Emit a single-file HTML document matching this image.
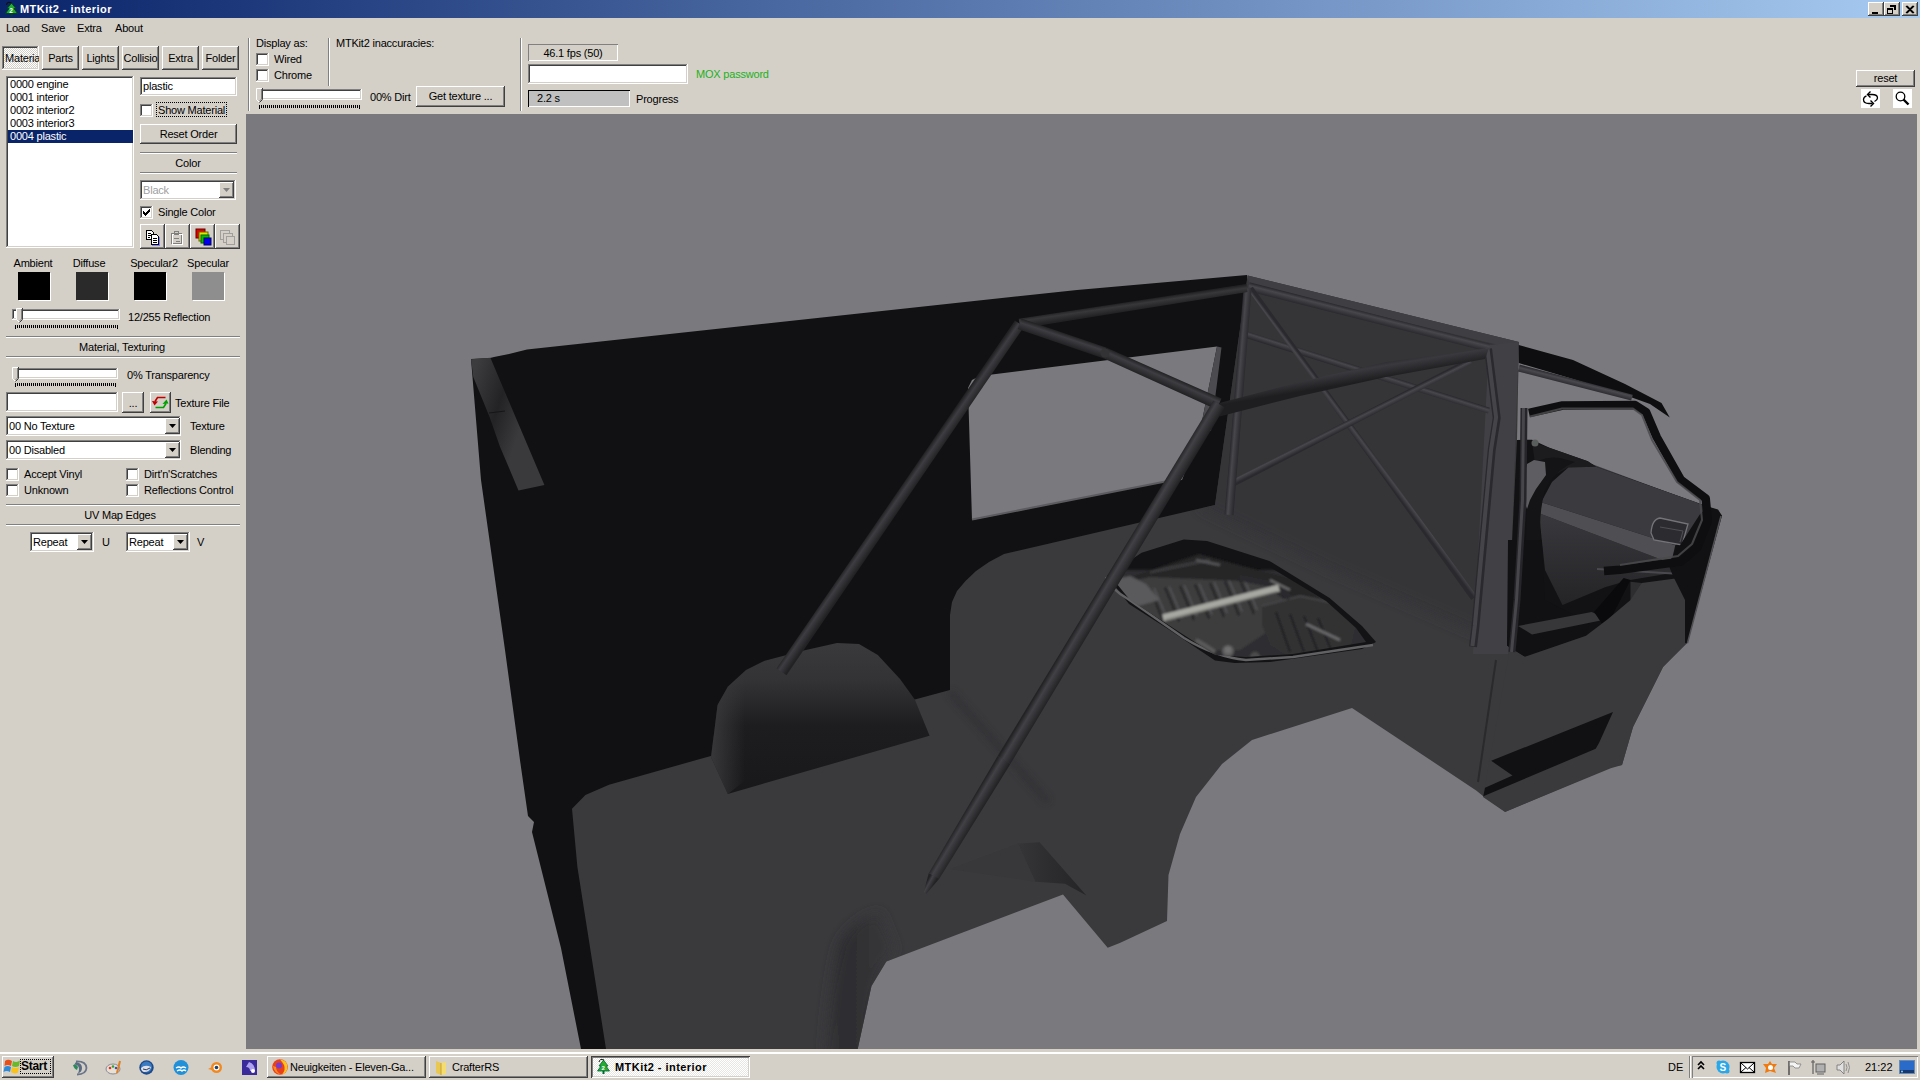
<!DOCTYPE html>
<html><head><meta charset="utf-8"><style>
html,body{margin:0;padding:0}
body{width:1920px;height:1080px;overflow:hidden;background:#d4d0c8;position:relative;font-family:"Liberation Sans",sans-serif}
.a{position:absolute}
.t{position:absolute;font:11px/13px "Liberation Sans",sans-serif;white-space:nowrap;color:#000;letter-spacing:-0.2px}
.c{text-align:center}
.raised{box-shadow:inset -1px -1px #404040,inset 1px 1px #fff,inset -2px -2px #808080,inset 2px 2px #d4d0c8}
.sunken{box-shadow:inset -1px -1px #fff,inset 1px 1px #808080,inset -2px -2px #d4d0c8,inset 2px 2px #404040}
</style></head><body>
<div class="a" style="left:0;top:0;width:1920px;height:18px;background:linear-gradient(90deg,#0a246a,#a6caf0)"></div>
<svg class="a" style="left:3px;top:0px" width="17" height="18"><path d="M8.5 3 L13 8.5 L11 8.5 L14.5 13.5 L2.5 13.5 L6 8.5 L4 8.5 Z" fill="#22aa33" stroke="#042" stroke-width="1"/><rect x="7.5" y="13.5" width="2" height="3" fill="#042"/><path d="M3.5 5 Q4 1 8.5 3" stroke="#111" fill="none" stroke-width="1.2"/><text x="6.3" y="12.5" font-size="6.5" fill="#fff" font-family="Liberation Sans" font-weight="bold">2</text></svg>
<div class="t" style="left:20px;top:3px;color:#fff;font-weight:bold;letter-spacing:0.45px">MTKit2 - interior</div>
<div class="a raised" style="left:1868px;top:2px;width:16px;height:14px;background:#d4d0c8"><svg width="16" height="14" style="position:absolute;left:0;top:0"><path d="M4 10h6v2h-6z" fill="#000"/></svg></div>
<div class="a raised" style="left:1884px;top:2px;width:16px;height:14px;background:#d4d0c8"><svg width="16" height="14" style="position:absolute;left:0;top:0"><path d="M6 3h6v5h-2v-3h-4z M3 6h6v6h-6z M4 8h4v3h-4z" fill="#000" fill-rule="evenodd"/><rect x="6" y="3" width="6" height="1.8" fill="#000"/><rect x="3" y="6" width="6" height="1.8" fill="#000"/></svg></div>
<div class="a raised" style="left:1902px;top:2px;width:16px;height:14px;background:#d4d0c8"><svg width="16" height="14" style="position:absolute;left:0;top:0"><path d="M4 4 L11 11 M11 4 L4 11 M5 4 L12 11 M12 4 L5 11" stroke="#000" stroke-width="1.2"/></svg></div>
<div class="t " style="left:6px;top:22px;">Load</div>
<div class="t " style="left:41px;top:22px;">Save</div>
<div class="t " style="left:77px;top:22px;">Extra</div>
<div class="t " style="left:115px;top:22px;">About</div>
<div class="a sunken" style="left:2px;top:46px;width:37px;height:24px;background-color:#e8e6e2;background-image:repeating-conic-gradient(#fff 0 25%,#d4d0c8 0 50%);background-size:2px 2px;overflow:hidden"><div class="t" style="left:3px;top:6px">Materia</div></div>
<div class="a raised" style="left:42px;top:46px;width:37px;height:24px;background:#d4d0c8"><div class="t c" style="left:0;top:6px;width:37px">Parts</div></div>
<div class="a raised" style="left:82px;top:46px;width:37px;height:24px;background:#d4d0c8"><div class="t c" style="left:0;top:6px;width:37px">Lights</div></div>
<div class="a raised" style="left:122px;top:46px;width:37px;height:24px;background:#d4d0c8"><div class="t c" style="left:0;top:6px;width:37px">Collisio</div></div>
<div class="a raised" style="left:162px;top:46px;width:37px;height:24px;background:#d4d0c8"><div class="t c" style="left:0;top:6px;width:37px">Extra</div></div>
<div class="a raised" style="left:202px;top:46px;width:37px;height:24px;background:#d4d0c8"><div class="t c" style="left:0;top:6px;width:37px">Folder</div></div>
<div class="a sunken" style="left:6px;top:76px;width:128px;height:172px;background:#fff"></div>
<div class="t " style="left:10px;top:78px;">0000 engine</div>
<div class="t " style="left:10px;top:91px;">0001 interior</div>
<div class="t " style="left:10px;top:104px;">0002 interior2</div>
<div class="t " style="left:10px;top:117px;">0003 interior3</div>
<div class="a" style="left:8px;top:130px;width:125px;height:13px;background:#0a246a"></div>
<div class="t " style="left:10px;top:130px;color:#fff">0004 plastic</div>
<div class="a sunken" style="left:140px;top:77px;width:97px;height:19px;background:#fff"></div>
<div class="t " style="left:143px;top:80px;">plastic</div>
<div class="a sunken" style="left:140px;top:104px;width:13px;height:13px;background:#fff"></div>
<div class="t " style="left:158px;top:104px;">Show Material</div>
<div class="a" style="left:156px;top:102px;width:71px;height:15px;outline:1px dotted #000;outline-offset:-1px"></div>
<div class="a raised" style="left:140px;top:124px;width:97px;height:20px;background:#d4d0c8"><div class="t c" style="left:0;top:4px;width:97px">Reset Order</div></div>
<div class="a" style="left:140px;top:152px;width:97px;height:2px;border-top:1px solid #808080;border-bottom:1px solid #fff;height:0"></div>
<div class="t c " style="left:139.5px;top:157px;width:97px;">Color</div>
<div class="a" style="left:140px;top:172px;width:97px;height:2px;border-top:1px solid #808080;border-bottom:1px solid #fff;height:0"></div>
<div class="a sunken" style="left:140px;top:180px;width:96px;height:20px;background:#fff"></div>
<div class="t " style="left:143px;top:184px;color:#a0a0a0">Black</div>
<div class="a raised" style="left:219px;top:182px;width:15px;height:16px;background:#d4d0c8"><svg width="15" height="16" style="position:absolute;left:0;top:0"><path d="M4 6h7l-3.5 4z" fill="#808080"/></svg></div>
<div class="a sunken" style="left:140px;top:206px;width:13px;height:13px;background:#fff"><svg width="13" height="13" style="position:absolute;left:0;top:0" shape-rendering="crispEdges" fill="#000"><rect x="9" y="3" width="1" height="1"/><rect x="8" y="4" width="1" height="1"/><rect x="9" y="4" width="1" height="1"/><rect x="3" y="5" width="1" height="1"/><rect x="7" y="5" width="1" height="1"/><rect x="8" y="5" width="1" height="1"/><rect x="9" y="5" width="1" height="1"/><rect x="3" y="6" width="1" height="1"/><rect x="4" y="6" width="1" height="1"/><rect x="6" y="6" width="1" height="1"/><rect x="7" y="6" width="1" height="1"/><rect x="8" y="6" width="1" height="1"/><rect x="3" y="7" width="1" height="1"/><rect x="4" y="7" width="1" height="1"/><rect x="5" y="7" width="1" height="1"/><rect x="6" y="7" width="1" height="1"/><rect x="7" y="7" width="1" height="1"/><rect x="4" y="8" width="1" height="1"/><rect x="5" y="8" width="1" height="1"/><rect x="6" y="8" width="1" height="1"/><rect x="5" y="9" width="1" height="1"/></svg></div>
<div class="t " style="left:158px;top:206px;">Single Color</div>
<div class="a raised" style="left:140px;top:224px;width:25px;height:25px;background:#d4d0c8"></div>
<div class="a raised" style="left:165px;top:224px;width:25px;height:25px;background:#d4d0c8"></div>
<div class="a raised" style="left:190px;top:224px;width:25px;height:25px;background:#d4d0c8"></div>
<div class="a raised" style="left:215px;top:224px;width:25px;height:25px;background:#d4d0c8"></div>
<svg class="a" style="left:140px;top:224px" width="100" height="25">
<g transform="translate(6,6)" shape-rendering="crispEdges"><path d="M0.5 0.5h5l2 2v7h-7z" fill="#fff" stroke="#000"/><path d="M2 3h3M2 5h4M2 7h2" stroke="#000"/><path d="M5.5 4.5h5l2 2v8h-7z" fill="#fff" stroke="#000"/><path d="M7 8h4M7 10h4M7 12h4" stroke="#000"/><path d="M13 7v8h-7" stroke="#8080ff" fill="none"/></g>
<g transform="translate(30,6)" shape-rendering="crispEdges"><path d="M1.5 3.5h10v10h-10z" fill="none" stroke="#808080"/><path d="M2.5 4.5h10v10h-10z" fill="none" stroke="#fff"/><path d="M4.5 1.5h4v3h-4z" fill="none" stroke="#808080"/><path d="M4 8h5M6 11h4" stroke="#808080"/></g>
<g transform="translate(56,5)"><rect x="0" y="0" width="9" height="9" fill="#e00000" stroke="#600"/><rect x="3" y="3" width="9" height="9" fill="#e8e000" stroke="#660"/><rect x="5" y="6" width="8" height="8" fill="#00c000" stroke="#060"/><rect x="8" y="9" width="7" height="7" fill="#0000f0" stroke="#006"/></g>
<g transform="translate(80,6)" opacity="0.6"><rect x="0.5" y="0.5" width="9" height="9" fill="none" stroke="#808080"/><rect x="3.5" y="3.5" width="9" height="9" fill="#d4d0c8" stroke="#808080"/><rect x="6.5" y="6.5" width="8" height="8" fill="#d4d0c8" stroke="#808080"/></g>
</svg>
<div class="t c " style="left:-7.0px;top:257px;width:80px;">Ambient</div>
<div class="t c " style="left:49.0px;top:257px;width:80px;">Diffuse</div>
<div class="t c " style="left:114.0px;top:257px;width:80px;">Specular2</div>
<div class="t c " style="left:168.0px;top:257px;width:80px;">Specular</div>
<div class="a" style="left:18px;top:272px;width:32px;height:28px;background:#000;box-shadow:1px 1px #fff"></div>
<div class="a" style="left:76px;top:272px;width:32px;height:28px;background:#2a2a2a;box-shadow:1px 1px #fff"></div>
<div class="a" style="left:134px;top:272px;width:32px;height:28px;background:#000;box-shadow:1px 1px #fff"></div>
<div class="a" style="left:192px;top:272px;width:32px;height:28px;background:#8e8e8e;box-shadow:1px 1px #fff"></div>
<div class="a sunken" style="left:12px;top:309px;width:108px;height:11px;background:#fff"></div>
<svg class="a" style="left:16px;top:308px" width="8" height="16"><path d="M0.5,14.5 V0.5 H6.5 V11.5 L3.5,14.5" fill="#d4d0c8" stroke="none"/><path d="M0.5,11.5 V0.5 H6" stroke="#fff" fill="none"/><path d="M6.5,0 V11.5 L3.5,14.5" stroke="#404040" fill="none"/><path d="M5.5,1 V11 L3.5,13" stroke="#808080" fill="none"/><path d="M0.5,11.5 L3,14" stroke="#fff" fill="none"/></svg>
<svg class="a" style="left:0;top:0" width="1920" height="1080" shape-rendering="crispEdges" fill="#000"><rect x="15" y="325" width="1" height="4"/><rect x="17" y="325" width="1" height="3"/><rect x="19" y="325" width="1" height="3"/><rect x="21" y="325" width="1" height="3"/><rect x="23" y="325" width="1" height="3"/><rect x="25" y="325" width="1" height="3"/><rect x="27" y="325" width="1" height="3"/><rect x="29" y="325" width="1" height="3"/><rect x="31" y="325" width="1" height="3"/><rect x="33" y="325" width="1" height="3"/><rect x="35" y="325" width="1" height="3"/><rect x="37" y="325" width="1" height="3"/><rect x="39" y="325" width="1" height="3"/><rect x="41" y="325" width="1" height="3"/><rect x="43" y="325" width="1" height="3"/><rect x="45" y="325" width="1" height="3"/><rect x="47" y="325" width="1" height="3"/><rect x="49" y="325" width="1" height="3"/><rect x="51" y="325" width="1" height="3"/><rect x="53" y="325" width="1" height="3"/><rect x="55" y="325" width="1" height="3"/><rect x="57" y="325" width="1" height="3"/><rect x="59" y="325" width="1" height="3"/><rect x="61" y="325" width="1" height="3"/><rect x="63" y="325" width="1" height="3"/><rect x="65" y="325" width="1" height="3"/><rect x="67" y="325" width="1" height="3"/><rect x="69" y="325" width="1" height="3"/><rect x="71" y="325" width="1" height="3"/><rect x="73" y="325" width="1" height="3"/><rect x="75" y="325" width="1" height="3"/><rect x="77" y="325" width="1" height="3"/><rect x="79" y="325" width="1" height="3"/><rect x="81" y="325" width="1" height="3"/><rect x="83" y="325" width="1" height="3"/><rect x="85" y="325" width="1" height="3"/><rect x="87" y="325" width="1" height="3"/><rect x="89" y="325" width="1" height="3"/><rect x="91" y="325" width="1" height="3"/><rect x="93" y="325" width="1" height="3"/><rect x="95" y="325" width="1" height="3"/><rect x="97" y="325" width="1" height="3"/><rect x="99" y="325" width="1" height="3"/><rect x="101" y="325" width="1" height="3"/><rect x="103" y="325" width="1" height="3"/><rect x="105" y="325" width="1" height="3"/><rect x="107" y="325" width="1" height="3"/><rect x="109" y="325" width="1" height="3"/><rect x="111" y="325" width="1" height="3"/><rect x="113" y="325" width="1" height="3"/><rect x="115" y="325" width="1" height="3"/><rect x="117" y="325" width="1" height="4"/></svg>
<div class="t " style="left:128px;top:311px;">12/255 Reflection</div>
<div class="a" style="left:6px;top:336px;width:234px;height:2px;border-top:1px solid #808080;border-bottom:1px solid #fff;height:0"></div>
<div class="t c " style="left:22.0px;top:341px;width:200px;">Material, Texturing</div>
<div class="a" style="left:6px;top:356px;width:234px;height:2px;border-top:1px solid #808080;border-bottom:1px solid #fff;height:0"></div>
<div class="a sunken" style="left:12px;top:368px;width:106px;height:11px;background:#fff"></div>
<svg class="a" style="left:12px;top:367px" width="8" height="16"><path d="M0.5,14.5 V0.5 H6.5 V11.5 L3.5,14.5" fill="#d4d0c8" stroke="none"/><path d="M0.5,11.5 V0.5 H6" stroke="#fff" fill="none"/><path d="M6.5,0 V11.5 L3.5,14.5" stroke="#404040" fill="none"/><path d="M5.5,1 V11 L3.5,13" stroke="#808080" fill="none"/><path d="M0.5,11.5 L3,14" stroke="#fff" fill="none"/></svg>
<svg class="a" style="left:0;top:0" width="1920" height="1080" shape-rendering="crispEdges" fill="#000"><rect x="15" y="383" width="1" height="4"/><rect x="17" y="383" width="1" height="3"/><rect x="19" y="383" width="1" height="3"/><rect x="21" y="383" width="1" height="3"/><rect x="23" y="383" width="1" height="3"/><rect x="25" y="383" width="1" height="3"/><rect x="27" y="383" width="1" height="3"/><rect x="29" y="383" width="1" height="3"/><rect x="31" y="383" width="1" height="3"/><rect x="33" y="383" width="1" height="3"/><rect x="35" y="383" width="1" height="3"/><rect x="37" y="383" width="1" height="3"/><rect x="39" y="383" width="1" height="3"/><rect x="41" y="383" width="1" height="3"/><rect x="43" y="383" width="1" height="3"/><rect x="45" y="383" width="1" height="3"/><rect x="47" y="383" width="1" height="3"/><rect x="49" y="383" width="1" height="3"/><rect x="51" y="383" width="1" height="3"/><rect x="53" y="383" width="1" height="3"/><rect x="55" y="383" width="1" height="3"/><rect x="57" y="383" width="1" height="3"/><rect x="59" y="383" width="1" height="3"/><rect x="61" y="383" width="1" height="3"/><rect x="63" y="383" width="1" height="3"/><rect x="65" y="383" width="1" height="3"/><rect x="67" y="383" width="1" height="3"/><rect x="69" y="383" width="1" height="3"/><rect x="71" y="383" width="1" height="3"/><rect x="73" y="383" width="1" height="3"/><rect x="75" y="383" width="1" height="3"/><rect x="77" y="383" width="1" height="3"/><rect x="79" y="383" width="1" height="3"/><rect x="81" y="383" width="1" height="3"/><rect x="83" y="383" width="1" height="3"/><rect x="85" y="383" width="1" height="3"/><rect x="87" y="383" width="1" height="3"/><rect x="89" y="383" width="1" height="3"/><rect x="91" y="383" width="1" height="3"/><rect x="93" y="383" width="1" height="3"/><rect x="95" y="383" width="1" height="3"/><rect x="97" y="383" width="1" height="3"/><rect x="99" y="383" width="1" height="3"/><rect x="101" y="383" width="1" height="3"/><rect x="103" y="383" width="1" height="3"/><rect x="105" y="383" width="1" height="3"/><rect x="107" y="383" width="1" height="3"/><rect x="109" y="383" width="1" height="3"/><rect x="111" y="383" width="1" height="3"/><rect x="113" y="383" width="1" height="3"/><rect x="115" y="383" width="1" height="4"/></svg>
<div class="t " style="left:127px;top:369px;">0% Transparency</div>
<div class="a sunken" style="left:6px;top:392px;width:112px;height:20px;background:#fff"></div>
<div class="a raised" style="left:122px;top:392px;width:22px;height:21px;background:#d4d0c8"><div class="t c" style="left:0;top:5px;width:22px">...</div></div>
<div class="a raised" style="left:150px;top:392px;width:21px;height:21px;background:#d4d0c8"><svg width="21" height="21" style="position:absolute;left:0;top:0"><path d="M15.5,5.5 H7.5 L5,9.5" stroke="#c00000" stroke-width="1.6" fill="none"/><polygon points="2,9 8,9.5 4.5,13.5" fill="#c00000"/><path d="M5.5,15.5 H13.5 L16,11.5" stroke="#00a000" stroke-width="1.6" fill="none"/><polygon points="12.5,12 18.5,11.5 16.5,7.5" fill="#00a000"/></svg></div>
<div class="t " style="left:175px;top:397px;">Texture File</div>
<div class="a sunken" style="left:6px;top:416px;width:175px;height:20px;background:#fff"></div>
<div class="t " style="left:9px;top:420px;">00 No Texture</div>
<div class="a raised" style="left:165px;top:418px;width:15px;height:16px;background:#d4d0c8"><svg width="15" height="16" style="position:absolute;left:0;top:0"><path d="M4.0 6.0 h7 l-3.5 4 z" fill="#000"/></svg></div>
<div class="t " style="left:190px;top:420px;">Texture</div>
<div class="a sunken" style="left:6px;top:440px;width:175px;height:20px;background:#fff"></div>
<div class="t " style="left:9px;top:444px;">00 Disabled</div>
<div class="a raised" style="left:165px;top:442px;width:15px;height:16px;background:#d4d0c8"><svg width="15" height="16" style="position:absolute;left:0;top:0"><path d="M4.0 6.0 h7 l-3.5 4 z" fill="#000"/></svg></div>
<div class="t " style="left:190px;top:444px;">Blending</div>
<div class="a sunken" style="left:6px;top:468px;width:13px;height:13px;background:#fff"></div>
<div class="t " style="left:24px;top:468px;">Accept Vinyl</div>
<div class="a sunken" style="left:6px;top:484px;width:13px;height:13px;background:#fff"></div>
<div class="t " style="left:24px;top:484px;">Unknown</div>
<div class="a sunken" style="left:126px;top:468px;width:13px;height:13px;background:#fff"></div>
<div class="t " style="left:144px;top:468px;">Dirt'n'Scratches</div>
<div class="a sunken" style="left:126px;top:484px;width:13px;height:13px;background:#fff"></div>
<div class="t " style="left:144px;top:484px;">Reflections Control</div>
<div class="a" style="left:6px;top:504px;width:234px;height:2px;border-top:1px solid #808080;border-bottom:1px solid #fff;height:0"></div>
<div class="t c " style="left:20.0px;top:509px;width:200px;">UV Map Edges</div>
<div class="a" style="left:6px;top:524px;width:234px;height:2px;border-top:1px solid #808080;border-bottom:1px solid #fff;height:0"></div>
<div class="a sunken" style="left:30px;top:532px;width:64px;height:20px;background:#fff"></div>
<div class="t " style="left:33px;top:536px;">Repeat</div>
<div class="a raised" style="left:77px;top:534px;width:15px;height:16px;background:#d4d0c8"><svg width="15" height="16" style="position:absolute;left:0;top:0"><path d="M4.0 6.0 h7 l-3.5 4 z" fill="#000"/></svg></div>
<div class="t " style="left:102px;top:536px;">U</div>
<div class="a sunken" style="left:126px;top:532px;width:64px;height:20px;background:#fff"></div>
<div class="t " style="left:129px;top:536px;">Repeat</div>
<div class="a raised" style="left:173px;top:534px;width:15px;height:16px;background:#d4d0c8"><svg width="15" height="16" style="position:absolute;left:0;top:0"><path d="M4.0 6.0 h7 l-3.5 4 z" fill="#000"/></svg></div>
<div class="t " style="left:197px;top:536px;">V</div>
<div class="a" style="left:248px;top:38px;width:0px;height:73px;border-left:1px solid #808080;border-right:1px solid #fff;width:0"></div>
<div class="t " style="left:256px;top:37px;">Display as:</div>
<div class="a sunken" style="left:256px;top:53px;width:13px;height:13px;background:#fff"></div>
<div class="t " style="left:274px;top:53px;">Wired</div>
<div class="a sunken" style="left:256px;top:69px;width:13px;height:13px;background:#fff"></div>
<div class="t " style="left:274px;top:69px;">Chrome</div>
<div class="a" style="left:328px;top:38px;width:0px;height:48px;border-left:1px solid #808080;border-right:1px solid #fff;width:0"></div>
<div class="t " style="left:336px;top:37px;">MTKit2 inaccuracies:</div>
<div class="a sunken" style="left:256px;top:89px;width:106px;height:11px;background:#fff"></div>
<svg class="a" style="left:256px;top:88px" width="8" height="16"><path d="M0.5,14.5 V0.5 H6.5 V11.5 L3.5,14.5" fill="#d4d0c8" stroke="none"/><path d="M0.5,11.5 V0.5 H6" stroke="#fff" fill="none"/><path d="M6.5,0 V11.5 L3.5,14.5" stroke="#404040" fill="none"/><path d="M5.5,1 V11 L3.5,13" stroke="#808080" fill="none"/><path d="M0.5,11.5 L3,14" stroke="#fff" fill="none"/></svg>
<svg class="a" style="left:0;top:0" width="1920" height="1080" shape-rendering="crispEdges" fill="#000"><rect x="259" y="105" width="1" height="4"/><rect x="261" y="105" width="1" height="3"/><rect x="263" y="105" width="1" height="3"/><rect x="265" y="105" width="1" height="3"/><rect x="267" y="105" width="1" height="3"/><rect x="269" y="105" width="1" height="3"/><rect x="271" y="105" width="1" height="3"/><rect x="273" y="105" width="1" height="3"/><rect x="275" y="105" width="1" height="3"/><rect x="277" y="105" width="1" height="3"/><rect x="279" y="105" width="1" height="3"/><rect x="281" y="105" width="1" height="3"/><rect x="283" y="105" width="1" height="3"/><rect x="285" y="105" width="1" height="3"/><rect x="287" y="105" width="1" height="3"/><rect x="289" y="105" width="1" height="3"/><rect x="291" y="105" width="1" height="3"/><rect x="293" y="105" width="1" height="3"/><rect x="295" y="105" width="1" height="3"/><rect x="297" y="105" width="1" height="3"/><rect x="299" y="105" width="1" height="3"/><rect x="301" y="105" width="1" height="3"/><rect x="303" y="105" width="1" height="3"/><rect x="305" y="105" width="1" height="3"/><rect x="307" y="105" width="1" height="3"/><rect x="309" y="105" width="1" height="3"/><rect x="311" y="105" width="1" height="3"/><rect x="313" y="105" width="1" height="3"/><rect x="315" y="105" width="1" height="3"/><rect x="317" y="105" width="1" height="3"/><rect x="319" y="105" width="1" height="3"/><rect x="321" y="105" width="1" height="3"/><rect x="323" y="105" width="1" height="3"/><rect x="325" y="105" width="1" height="3"/><rect x="327" y="105" width="1" height="3"/><rect x="329" y="105" width="1" height="3"/><rect x="331" y="105" width="1" height="3"/><rect x="333" y="105" width="1" height="3"/><rect x="335" y="105" width="1" height="3"/><rect x="337" y="105" width="1" height="3"/><rect x="339" y="105" width="1" height="3"/><rect x="341" y="105" width="1" height="3"/><rect x="343" y="105" width="1" height="3"/><rect x="345" y="105" width="1" height="3"/><rect x="347" y="105" width="1" height="3"/><rect x="349" y="105" width="1" height="3"/><rect x="351" y="105" width="1" height="3"/><rect x="353" y="105" width="1" height="3"/><rect x="355" y="105" width="1" height="3"/><rect x="357" y="105" width="1" height="3"/><rect x="359" y="105" width="1" height="4"/></svg>
<div class="t " style="left:370px;top:91px;">00% Dirt</div>
<div class="a raised" style="left:416px;top:86px;width:89px;height:21px;background:#d4d0c8"><div class="t c" style="left:0;top:4px;width:89px">Get texture ...</div></div>
<div class="a" style="left:520px;top:38px;width:0px;height:73px;border-left:1px solid #808080;border-right:1px solid #fff;width:0"></div>
<div class="a" style="left:528px;top:44px;width:90px;height:17px;box-shadow:inset 1px 1px #808080,inset -1px -1px #fff"></div>
<div class="t c " style="left:528.0px;top:47px;width:90px;">46.1 fps (50)</div>
<div class="a sunken" style="left:528px;top:64px;width:160px;height:20px;background:#fff"></div>
<div class="t " style="left:696px;top:68px;color:#1cb01c">MOX password</div>
<div class="a" style="left:528px;top:90px;width:102px;height:17px;background:#c0c0c0;box-shadow:inset 1px 1px #000,inset -1px -1px #fff"></div>
<div class="t " style="left:537px;top:92px;">2.2 s</div>
<div class="t " style="left:636px;top:93px;">Progress</div>
<div class="a raised" style="left:1856px;top:70px;width:59px;height:17px;background:#d4d0c8"><div class="t c" style="left:0;top:2px;width:59px">reset</div></div>
<div class="a" style="left:1861px;top:89px;width:19px;height:19px;background:#fff"><svg width="19" height="19" style="position:absolute;left:0;top:0"><path d="M7,5.5 H11 Q16.5,5.5 16.5,9 Q16.5,11 13.5,12.5" stroke="#000" stroke-width="1.3" fill="none"/><path d="M9.5,2.5 L6.5,5.5 L9.5,8.5" stroke="#000" stroke-width="1.4" fill="none"/><path d="M5.5,6.8 Q2.5,8 2.5,10.5 Q2.5,14.5 8,14.5 H11.5" stroke="#000" stroke-width="1.3" fill="none"/><path d="M9.5,11.5 L12.5,14.5 L9.5,17.5" stroke="#000" stroke-width="1.4" fill="none"/></svg></div>
<div class="a" style="left:1893px;top:89px;width:19px;height:19px;background:#fff"><svg width="19" height="19" style="position:absolute;left:0;top:0"><circle cx="7.5" cy="7.5" r="4.3" stroke="#000" stroke-width="1.3" fill="none"/><path d="M10.5 10.5 L15.5 15.5" stroke="#000" stroke-width="2.4"/></svg></div>
<svg class="a" style="left:246px;top:114px" width="1671" height="935" viewBox="246 114 1671 935"><rect x="246" y="114" width="1671" height="935" fill="#7a797e"/><defs>
<linearGradient id="trim" gradientUnits="userSpaceOnUse" x1="471" y1="380" x2="530" y2="400"><stop offset="0" stop-color="#3c3c3f"/><stop offset="0.55" stop-color="#232326"/><stop offset="1" stop-color="#3a3a3d"/></linearGradient>
<linearGradient id="hump" gradientUnits="userSpaceOnUse" x1="0" y1="642" x2="0" y2="795"><stop offset="0" stop-color="#3a3a3d"/><stop offset="0.25" stop-color="#333336"/><stop offset="0.55" stop-color="#1d1d20"/><stop offset="1" stop-color="#18181a"/></linearGradient>
<linearGradient id="humpL" gradientUnits="userSpaceOnUse" x1="712" y1="0" x2="745" y2="0"><stop offset="0" stop-color="#3a3a3d" stop-opacity="0.9"/><stop offset="1" stop-color="#3a3a3d" stop-opacity="0"/></linearGradient>
<linearGradient id="tunnelL" gradientUnits="userSpaceOnUse" x1="950" y1="0" x2="1000" y2="0"><stop offset="0" stop-color="#2e2e31"/><stop offset="1" stop-color="#3a3a3d" stop-opacity="0"/></linearGradient>
<linearGradient id="dashface" gradientUnits="userSpaceOnUse" x1="0" y1="500" x2="0" y2="565"><stop offset="0" stop-color="#525256"/><stop offset="1" stop-color="#46464a"/></linearGradient>
<linearGradient id="belowdash" gradientUnits="userSpaceOnUse" x1="0" y1="515" x2="0" y2="640"><stop offset="0" stop-color="#2c2c30"/><stop offset="1" stop-color="#3a3a3d"/></linearGradient>
</defs>
<polygon points="471.0,359.0 490.0,358.0 494.0,357.0 509.0,354.0 527.0,349.6 580.0,343.7 1077.0,290.0 1247.0,275.0 1247.0,290.0 1215.0,520.0 950.0,700.0 700.0,900.0 620.0,1049.0 581.0,1049.0 561.0,948.0 532.0,832.0 534.0,822.0 528.0,816.0 520.4,763.0 505.0,650.0 481.0,480.0" fill="#111113" />
<polygon points="980.0,376.0 1217.0,346.5 1200.0,431.0 1182.0,480.0 1168.0,481.0 972.0,520.0 968.0,388.0 972.0,380.0" fill="#7a797e" />
<path d="M972,519.5 L1168,481" fill="none" stroke="#5c5c60" stroke-width="2" />
<polygon points="1217.0,346.5 1221.5,347.6 1211.0,431.0 1200.0,431.0" fill="#4c4c50" />
<polygon points="471.0,359.3 490.4,357.8 544.4,485.0 518.5,490.4 500.0,446.7 489.6,417.0 473.3,377.0" fill="url(#trim)" />
<path d="M489,413 L505,411" fill="none" stroke="#151517" stroke-width="1" />
<polygon points="606.0,1049.0 588.0,934.5 577.4,867.0 572.0,808.8 585.4,795.0 609.0,784.8 700.0,759.0 914.8,699.6 950.0,690.0 950.0,615.0 952.0,602.0 957.0,591.0 965.5,581.0 976.0,571.0 989.0,562.0 1004.0,554.0 1215.0,505.0 1247.6,275.6 1518.9,342.0 1517.0,440.0 1529.0,441.0 1589.0,463.0 1713.0,509.0 1722.0,515.6 1705.0,560.0 1687.0,642.0 1663.0,667.0 1633.0,727.0 1622.0,765.0 1610.7,768.3 1505.4,811.7 1483.0,796.0 1476.2,790.4 1352.0,708.0 1252.0,740.0 1222.0,764.0 1196.0,797.0 1180.0,834.0 1168.5,875.0 1167.0,921.0 1119.8,943.0 1107.7,947.7 1063.0,894.5 886.4,961.5 871.5,986.0 857.7,1049.0" fill="#3a3a3d" />
<clipPath id="bodyclip"><polygon points="606,1049 588,934.5 577.4,867 572,808.75 585.4,795 609,784.8 700,759 914.8,699.6 950,690 950,615 952,602 957,591 965.5,581 976,571 989,562 1004,554 1215,505 1247.6,275.6 1518.9,342 1517,440 1529,441 1589,463 1713,509 1722,515.6 1705,560 1687,642 1663,667 1633,727 1622,765 1610.7,768.3 1505.4,811.7 1483,796 1476.2,790.4 1352,708 1252,740 1222,764 1196,797 1180,834 1168.5,875 1167,921 1119.8,943 1107.7,947.7 1063,894.5 886.4,961.5 871.5,986 857.7,1049"/></clipPath>
<linearGradient id="ridge" gradientUnits="userSpaceOnUse" x1="1010" y1="0" x2="1080" y2="0"><stop offset="0" stop-color="#38383b"/><stop offset="0.5" stop-color="#2e2e31"/><stop offset="1" stop-color="#262629"/></linearGradient>
<polygon points="1018.0,843.4 1039.6,842.3 1086.4,895.5 1065.0,883.8 1035.3,881.7" fill="url(#ridge)" />
<polygon points="950.0,869.0 1018.0,843.4 1035.3,881.7" fill="#38383b" />
<filter id="blur6" x="-50%" y="-50%" width="200%" height="200%"><feGaussianBlur stdDeviation="6"/></filter>
<linearGradient id="iarch2" gradientUnits="userSpaceOnUse" x1="822" y1="0" x2="885" y2="0"><stop offset="0" stop-color="#3a3a3d"/><stop offset="0.35" stop-color="#2c2c2f"/><stop offset="1" stop-color="#38383b"/></linearGradient>
<g clip-path="url(#bodyclip)"><path d="M880,912 Q850,920 838,945 Q828,990 824,1060 L872,1060 Q868,990 886,961 L895,950 Z" fill="url(#iarch2)" filter="url(#blur6)"/></g>
<filter id="blur3" x="-50%" y="-50%" width="200%" height="200%"><feGaussianBlur stdDeviation="3"/></filter>
<g clip-path="url(#bodyclip)"><path d="M950,692 L1048,802" stroke="#2e2e31" stroke-width="7" filter="url(#blur3)" opacity="0.55"/></g>
<g clip-path="url(#bodyclip)"><polygon points="1200,300 1247,276 1518,342 1500,640 1473,632 1330,570 1200,508" fill="#353538" filter="url(#blur6)" opacity="0.8"/></g>
<polygon points="1247.6,275.6 1518.9,342.0 1518.9,350.0 1249.0,284.0" fill="#3f3f43" />
<polygon points="1489.0,345.0 1518.9,342.0 1508.0,654.0 1473.0,654.0" fill="#414145" />
<polygon points="727.8,794.0 711.0,757.0 717.6,705.0 727.8,686.7 746.0,670.0 764.8,660.7 803.7,650.5 837.0,643.0 859.0,644.0 877.8,655.0 900.0,679.0 914.8,699.6 929.6,735.7" fill="url(#hump)" />
<polygon points="727.8,794.0 711.0,757.0 717.6,705.0 727.8,686.7 746.0,670.0 746.0,780.0" fill="url(#humpL)" />
<polygon points="1517.0,440.0 1532.0,439.7 1550.0,448.0 1587.8,461.2 1596.0,466.8 1696.0,502.2 1718.0,510.5 1721.0,516.0 1704.0,580.0 1687.5,642.8 1600.0,650.0 1525.0,656.7 1507.0,645.5" fill="#121214" />
<polygon points="1532.0,442.0 1550.0,448.0 1587.8,461.2 1596.0,466.8 1568.3,467.5 1545.0,480.0 1536.0,470.0" fill="#1c1c1f" />
<circle cx="1535" cy="443" r="3.5" fill="#5a5e5c"/>
<polygon points="1568.3,467.5 1596.0,466.8 1696.0,502.2 1708.0,508.0 1700.0,530.0 1675.3,545.3 1541.2,502.2 1552.0,482.0" fill="#3b3b3f" />
<linearGradient id="bface" gradientUnits="userSpaceOnUse" x1="0" y1="510" x2="0" y2="610"><stop offset="0" stop-color="#3a3a3e"/><stop offset="1" stop-color="#232326"/></linearGradient>
<polygon points="1539.0,513.3 1671.0,563.3 1690.0,570.0 1630.0,580.0 1605.6,587.0 1562.5,605.0 1545.0,570.0" fill="url(#bface)" />
<polygon points="1541.2,502.2 1675.3,545.3 1671.0,563.3 1539.0,513.3" fill="#4f4f53" />
<path d="M1651,533 Q1652,519 1660,518 L1688,524 L1682,545 L1654,540 Z" fill="#2c2c30" stroke="#747478" stroke-width="1.3" />
<path d="M1660,527 L1683,531 L1680,542" fill="none" stroke="#505054" stroke-width="1" />
<path d="M1527,470 Q1540,455 1560,458 L1575,462 Q1555,470 1545,490 Q1538,515 1541,545 L1545,600 L1525,610 Z" fill="#141416" stroke="none" stroke-width="1" />
<polygon points="1527.0,464.0 1534.0,460.0 1545.0,462.0 1546.0,475.0 1536.0,489.0 1530.0,500.0 1527.0,509.0 1524.0,500.0 1524.0,475.0" fill="#5e5e62" />
<polygon points="1508.0,540.0 1541.7,540.0 1545.0,600.0 1590.0,623.0 1586.0,635.8 1525.0,656.7 1507.0,645.5" fill="#111113" />
<polygon points="1518.0,626.0 1591.7,612.0 1608.0,619.0 1532.0,634.4" fill="#37373a" />
<polygon points="1623.6,578.0 1630.5,580.0 1605.6,629.0 1594.0,612.0" fill="#0a0a0c" />
<polygon points="1630.5,581.7 1641.7,583.0 1641.7,604.0 1630.5,600.0" fill="#2e2e31" />
<path d="M1597,569 L1694,574.7" fill="none" stroke="#4a4a4e" stroke-width="2" />
<polygon points="1641.7,583.0 1694.0,576.0 1687.5,642.8 1663.0,667.0 1633.0,727.0 1622.0,765.0 1611.0,767.0 1505.0,812.0 1483.0,797.0 1509.0,654.0 1525.0,656.7 1586.0,635.8 1608.0,619.0 1630.5,600.0" fill="#3a3a3d" />
<polygon points="1707.8,506.5 1718.0,509.6 1722.0,515.7 1687.3,643.3 1685.0,643.0 1685.0,600.0 1673.0,576.0 1668.0,563.7 1699.6,514.7" fill="#111113" />
<path d="M1721,516 L1687.5,643" fill="none" stroke="#505054" stroke-width="1.5" />
<polygon points="1491.2,760.8 1613.0,712.0 1599.0,743.0 1595.7,748.8 1483.3,796.2 1485.0,787.8 1512.5,775.4" fill="#111113" />
<path d="M1496,660 L1478,782" fill="none" stroke="#2a2a2d" stroke-width="2" />
<polygon points="1107.0,576.0 1141.6,552.8 1183.8,539.5 1207.0,541.0 1269.4,561.0 1329.6,598.0 1362.0,626.0 1376.0,642.0 1362.0,649.0 1269.7,662.0 1234.7,663.0 1215.0,660.6 1168.0,629.0 1129.0,604.0" fill="#131315" />
<path d="M1106,577 Q1112,590 1128,599 L1184,638 Q1215,657 1246,660 L1293,657 L1373,645" fill="none" stroke="#626264" stroke-width="2.5" />
<clipPath id="engclip"><polygon points="1112,578 1140,560 1184,546 1207,548 1268,566 1326,601 1356,628 1366,642 1293,654 1246,657 1215,655 1184,635 1130,600"/></clipPath>
<filter id="eblur"><feGaussianBlur stdDeviation="0.8"/></filter>
<g clip-path="url(#engclip)"><g filter="url(#eblur)">
<polygon points="1100.0,570.0 1380.0,570.0 1380.0,670.0 1100.0,670.0" fill="#2e2e30" />
<polygon points="1134.0,576.0 1199.0,554.0 1246.0,567.0 1293.0,579.0 1330.0,605.0 1260.0,600.0 1170.0,605.0" fill="#262628" />
<path d="M1150,572 L1210,560" fill="none" stroke="#3a3a3c" stroke-width="3" />
<path d="M1196,560 L1220,565" fill="none" stroke="#555557" stroke-width="2.5" />
<polygon points="1118.0,584.0 1150.0,577.0 1262.0,582.0 1285.0,600.0 1278.0,625.0 1240.0,650.0 1200.0,650.0 1165.0,635.0 1135.0,612.0" fill="#3c3c3e" />
<path d="M1150,589.0 Q1156,603.0 1164,623.0" fill="none" stroke="#252527" stroke-width="2.2" />
<path d="M1154,588.0 Q1160,601.0 1167,619.0" fill="none" stroke="#575759" stroke-width="1.5" />
<path d="M1165,587.5 Q1171,601.5 1179,621.5" fill="none" stroke="#252527" stroke-width="2.2" />
<path d="M1169,586.5 Q1175,599.5 1182,617.5" fill="none" stroke="#575759" stroke-width="1.5" />
<path d="M1180,586.0 Q1186,600.0 1194,620.0" fill="none" stroke="#252527" stroke-width="2.2" />
<path d="M1184,585.0 Q1190,598.0 1197,616.0" fill="none" stroke="#575759" stroke-width="1.5" />
<path d="M1195,584.5 Q1201,598.5 1209,618.5" fill="none" stroke="#252527" stroke-width="2.2" />
<path d="M1199,583.5 Q1205,596.5 1212,614.5" fill="none" stroke="#575759" stroke-width="1.5" />
<path d="M1210,583.0 Q1216,597.0 1224,617.0" fill="none" stroke="#252527" stroke-width="2.2" />
<path d="M1214,582.0 Q1220,595.0 1227,613.0" fill="none" stroke="#575759" stroke-width="1.5" />
<path d="M1225,581.5 Q1231,595.5 1239,615.5" fill="none" stroke="#252527" stroke-width="2.2" />
<path d="M1229,580.5 Q1235,593.5 1242,611.5" fill="none" stroke="#575759" stroke-width="1.5" />
<path d="M1240,580.0 Q1246,594.0 1254,614.0" fill="none" stroke="#252527" stroke-width="2.2" />
<path d="M1244,579.0 Q1250,592.0 1257,610.0" fill="none" stroke="#575759" stroke-width="1.5" />
<polygon points="1112.0,580.0 1130.0,576.0 1146.0,584.0 1160.0,600.0 1138.0,606.0 1118.0,596.0" fill="#5a5a5c" />
<polygon points="1262.0,606.0 1300.0,596.0 1338.0,604.0 1356.0,626.0 1350.0,652.0 1292.0,660.0 1270.0,645.0 1262.0,625.0" fill="#303032" />
<path d="M1262,606 L1300,596 L1338,604 L1356,626" fill="none" stroke="#4a4a4c" stroke-width="1.5" />
<path d="M1276,612 L1290,652" fill="none" stroke="#1c1c1e" stroke-width="1.5" />
<path d="M1290,614 L1304,652" fill="none" stroke="#1c1c1e" stroke-width="1.5" />
<path d="M1304,616 L1318,652" fill="none" stroke="#1c1c1e" stroke-width="1.5" />
<path d="M1318,618 L1332,652" fill="none" stroke="#1c1c1e" stroke-width="1.5" />
<path d="M1306,624 L1340,640" fill="none" stroke="#6a6a6c" stroke-width="3" />
<path d="M1240,578 L1275,585 L1290,598" fill="none" stroke="#2c2c2e" stroke-width="6" />
<path d="M1270,580 L1290,590" fill="none" stroke="#6a6a6a" stroke-width="2.5" />
<path d="M1163,618 L1279,588" fill="none" stroke="#a8a8a2" stroke-width="7" />
<path d="M1165,620 L1277.5,591.5" fill="none" stroke="#6a6a66" stroke-width="1.2" />
<circle cx="1228" cy="651" r="6" fill="#5c5c5c"/><circle cx="1228" cy="650" r="3.5" fill="#707070"/><circle cx="1255" cy="657" r="5" fill="#4c4c4c"/><path d="M1196,640 Q1205,645 1215,652" stroke="#5a5a5a" stroke-width="4" fill="none"/><circle cx="1316" cy="656" r="2.5" fill="#3a9a4a"/>
</g></g>
<linearGradient id="tg1" gradientUnits="userSpaceOnUse" x1="1369.8" y1="313.1" x2="1367.7" y2="321.4"><stop offset="0" stop-color="#2a2a2e"/><stop offset="0.35" stop-color="#48484c"/><stop offset="1" stop-color="#2a2a2e"/></linearGradient>
<polygon points="1249.6,282.3 1490.0,343.9 1488.0,351.7 1247.4,291.1" fill="url(#tg1)" />
<linearGradient id="tg2" gradientUnits="userSpaceOnUse" x1="1366.0" y1="368.7" x2="1364.0" y2="375.0"><stop offset="0" stop-color="#2a2a2e"/><stop offset="0.35" stop-color="#48484c"/><stop offset="1" stop-color="#2a2a2e"/></linearGradient>
<polygon points="1242.0,329.7 1489.9,407.8 1488.1,413.6 1240.0,336.3" fill="url(#tg2)" />
<linearGradient id="tg3" gradientUnits="userSpaceOnUse" x1="1364.8" y1="441.3" x2="1359.6" y2="445.2"><stop offset="0" stop-color="#2a2a2e"/><stop offset="0.35" stop-color="#48484c"/><stop offset="1" stop-color="#2a2a2e"/></linearGradient>
<polygon points="1252.8,286.7 1476.8,596.0 1471.2,600.0 1248.0,290.3" fill="url(#tg3)" />
<linearGradient id="tg4" gradientUnits="userSpaceOnUse" x1="1348.9" y1="419.8" x2="1351.8" y2="425.6"><stop offset="0" stop-color="#2a2a2e"/><stop offset="0.35" stop-color="#48484c"/><stop offset="1" stop-color="#2a2a2e"/></linearGradient>
<polygon points="1469.3,358.0 1228.4,481.6 1231.6,487.8 1472.1,363.4" fill="url(#tg4)" />
<linearGradient id="tg5" gradientUnits="userSpaceOnUse" x1="1234.1" y1="401.3" x2="1242.5" y2="402.0"><stop offset="0" stop-color="#2a2a2e"/><stop offset="0.35" stop-color="#48484c"/><stop offset="1" stop-color="#2a2a2e"/></linearGradient>
<polygon points="1243.6,288.2 1224.5,514.4 1233.5,515.2 1251.6,288.8" fill="url(#tg5)" />
<path d="M1488,348.7 L1496.7,418 L1491.7,450 L1475.5,626 L1473,646.8" fill="none" stroke="#2a2a2e" stroke-width="8.0" stroke-linejoin="round" stroke-linecap="butt"/>
<path d="M1488,348.7 L1496.7,418 L1491.7,450 L1475.5,626 L1473,646.8" fill="none" stroke="#48484c" stroke-width="4.0" stroke-linejoin="round" stroke-linecap="butt" transform="translate(-0.6,-0.8)" opacity="0.9"/>
<linearGradient id="tg6" gradientUnits="userSpaceOnUse" x1="1132.6" y1="301.4" x2="1133.9" y2="310.3"><stop offset="0" stop-color="#222225"/><stop offset="0.35" stop-color="#38383b"/><stop offset="1" stop-color="#222225"/></linearGradient>
<polygon points="1018.7,318.8 1246.4,284.0 1247.6,292.0 1020.3,328.6" fill="url(#tg6)" />
<linearGradient id="t5g" gradientUnits="userSpaceOnUse" x1="1380" y1="360" x2="1383" y2="378"><stop offset="0" stop-color="#26262a"/><stop offset="0.35" stop-color="#3a3a3e"/><stop offset="1" stop-color="#1e1e21"/></linearGradient>
<polygon points="1219.6,403.0 1300.0,382.0 1386.0,362.0 1489.0,348.0 1485.0,359.0 1386.0,377.0 1300.0,396.0 1219.6,416.4" fill="url(#t5g)" />
<linearGradient id="tg7" gradientUnits="userSpaceOnUse" x1="895.8" y1="494.5" x2="905.2" y2="501.0"><stop offset="0" stop-color="#222225"/><stop offset="0.35" stop-color="#3e3e42"/><stop offset="1" stop-color="#222225"/></linearGradient>
<polygon points="1015.0,320.6 776.5,668.4 786.5,675.2 1024.0,326.8" fill="url(#tg7)" />
<linearGradient id="tg8" gradientUnits="userSpaceOnUse" x1="1064.0" y1="333.1" x2="1060.5" y2="343.6"><stop offset="0" stop-color="#222225"/><stop offset="0.35" stop-color="#3e3e42"/><stop offset="1" stop-color="#222225"/></linearGradient>
<polygon points="1021.3,318.5 1106.8,347.8 1103.2,358.2 1017.7,328.9" fill="url(#tg8)" />
<linearGradient id="tg9" gradientUnits="userSpaceOnUse" x1="1164.3" y1="373.3" x2="1159.7" y2="383.7"><stop offset="0" stop-color="#222225"/><stop offset="0.35" stop-color="#3e3e42"/><stop offset="1" stop-color="#222225"/></linearGradient>
<polygon points="1107.2,348.0 1221.5,398.5 1216.5,409.5 1102.8,358.0" fill="url(#tg9)" />
<circle cx="1105" cy="353" r="4.5" fill="#333336"/>
<linearGradient id="tg10" gradientUnits="userSpaceOnUse" x1="1105.5" y1="578.4" x2="1117.5" y2="585.6"><stop offset="0" stop-color="#222225"/><stop offset="0.35" stop-color="#424246"/><stop offset="1" stop-color="#222225"/></linearGradient>
<polygon points="1213.4,400.6 997.6,756.1 1010.4,763.9 1224.6,407.4" fill="url(#tg10)" />
<linearGradient id="tg11" gradientUnits="userSpaceOnUse" x1="963.2" y1="814.5" x2="974.8" y2="821.5"><stop offset="0" stop-color="#222225"/><stop offset="0.35" stop-color="#424246"/><stop offset="1" stop-color="#222225"/></linearGradient>
<polygon points="997.6,756.1 928.9,872.9 939.1,879.1 1010.4,763.9" fill="url(#tg11)" />
<linearGradient id="tg12" gradientUnits="userSpaceOnUse" x1="926.2" y1="882.7" x2="932.8" y2="886.3"><stop offset="0" stop-color="#222225"/><stop offset="0.35" stop-color="#424246"/><stop offset="1" stop-color="#222225"/></linearGradient>
<polygon points="928.7,873.2 923.7,892.3 926.3,893.7 939.3,878.8" fill="url(#tg12)" />
<polygon points="1518.8,345.0 1573.0,360.0 1625.0,384.0 1661.5,403.0 1669.8,417.5 1650.0,404.0 1625.0,395.0 1573.0,379.0 1518.8,363.0" fill="#0e0e10" />
<linearGradient id="tg13" gradientUnits="userSpaceOnUse" x1="1576.2" y1="379.7" x2="1574.6" y2="386.0"><stop offset="0" stop-color="#2e2e32"/><stop offset="0.35" stop-color="#4a4a4e"/><stop offset="1" stop-color="#2e2e32"/></linearGradient>
<polygon points="1519.6,364.6 1632.8,394.8 1631.2,400.6 1517.9,371.4" fill="url(#tg13)" />
<path d="M1524,408 L1523,500 L1517,600 L1512,652" fill="none" stroke="#26262a" stroke-width="7" stroke-linejoin="round"/>
<path d="M1523.5,408 L1522.5,500 L1516.5,600 L1511.5,652" fill="none" stroke="#47474b" stroke-width="3" stroke-linejoin="round"/>
<path d="M1529,413 L1562.5,405.5 L1635,405 L1646,412 L1656.7,437 L1681,480 L1705.7,498.4 L1707.8,520.8 L1697.5,547.3 L1681,561.6 L1620,569.8 L1604,571" fill="none" stroke="#0e0e10" stroke-width="8.5" stroke-linejoin="round"/>
<path d="M1530,416.5 L1562,408.5 L1633,408.5 L1642,415 L1652,440 L1677,482 L1700,500 L1702,520 L1692,544 L1678,556 L1620,565" fill="none" stroke="#4a4a4e" stroke-width="2" stroke-linejoin="round" opacity="0.85"/></svg>
<div class="a" style="left:0px;top:1052px;width:1920px;height:28px;background:#d4d0c8;border-top:1px solid #fff;box-sizing:border-box;height:28px;top:1052px"></div>
<div class="a" style="left:0px;top:1051px;width:1920px;height:1px;background:#d4d0c8"></div>
<div class="a" style="left:0;top:1053px;width:1920px;height:1px;background:#fff"></div>
<div class="a" style="left:2px;top:1056px;width:52px;height:22px;background:#d4d0c8;box-shadow:inset -1px -1px #404040,inset 1px 1px #fff,inset -2px -2px #808080,inset 2px 2px #d4d0c8"></div>
<svg class="a" style="left:3px;top:1057px" width="18" height="18">
<path d="M2 4 Q5 1.5 9 4 L8 9 Q4.5 7 1.5 9 Z" fill="#e8501a"/>
<path d="M10 4 Q13.5 6 17 3.5 L16 9 Q12.5 11 9 9 Z" fill="#6cb82c"/>
<path d="M1.5 10 Q4.5 8 8 10 L7 15 Q3.5 13 0.5 15 Z" fill="#2e8ad8"/>
<path d="M9 10 Q12.5 12 16 10 L15 15.5 Q11.5 17.5 8 15 Z" fill="#f8c21a"/>
</svg>
<div class="t" style="left:21px;top:1060px;font-weight:bold;font-size:12px;letter-spacing:-0.3px">Start</div>
<div class="a" style="left:20px;top:1059px;width:31px;height:15px;outline:1px dotted #000;outline-offset:-1px"></div>
<svg class="a" style="left:71px;top:1059px" width="17" height="17"><path d="M5 2.5 Q15 2 15.5 9 Q15 15.5 6 15.5" stroke="#6a7488" stroke-width="1.8" fill="none"/><path d="M5 3 Q11 4 11 9 Q11 13 7 14.5 Q9 10 7 7 Q5 5 3 6z" fill="#5a6a80"/><path d="M2 6 Q6 5 7 8 L6 11 Q3 10 2 6z" fill="#2a8a5a"/></svg>
<svg class="a" style="left:105px;top:1059px" width="17" height="17"><ellipse cx="8" cy="10" rx="7" ry="5" fill="#e8e0d0" stroke="#8a8a9a"/><circle cx="5" cy="9" r="1.3" fill="#e03030"/><circle cx="8" cy="7.5" r="1.3" fill="#30a030"/><circle cx="11" cy="9" r="1.3" fill="#3050e0"/><path d="M12 14 L15 2" stroke="#e08020" stroke-width="2"/></svg>
<svg class="a" style="left:138px;top:1059px" width="17" height="17"><circle cx="8.5" cy="8.5" r="7.2" fill="#1e4a8a"/><circle cx="8.5" cy="8" r="5.5" fill="#3a7ac0"/><path d="M3 9 Q7 5 13 8 Q12 13 6 13 Q3 12 3 9Z" fill="#e0e0e8"/><path d="M5 10 Q8 12 12 9" stroke="#2a3a5a" fill="none"/></svg>
<svg class="a" style="left:173px;top:1059px" width="17" height="17"><circle cx="8" cy="8.5" r="7.5" fill="#2090d8"/><path d="M3 9 Q6 7 8 9 Q10 7 13 9 M4 12 Q7 10 9 12 Q11 10 13 12" stroke="#fff" stroke-width="1.3" fill="none"/></svg>
<svg class="a" style="left:207px;top:1059px" width="17" height="17"><circle cx="9.5" cy="8.5" r="5.5" fill="#f08a20"/><circle cx="9.5" cy="8.5" r="3" fill="#fff"/><circle cx="9.5" cy="8.5" r="1.8" fill="#20406a"/><path d="M1 10 L5 8 L5 11z" fill="#f08a20"/></svg>
<svg class="a" style="left:241px;top:1059px" width="17" height="17"><rect x="1" y="1" width="15" height="15" fill="#3a2a9a"/><path d="M8 3 Q14 5 14 12 L9 12 Q9 8 5 8z" fill="#b0a0f0"/><circle cx="12" cy="12" r="2" fill="#fff"/></svg>
<div class="a" style="left:267px;top:1056px;width:159px;height:22px;background:#d4d0c8;box-shadow:inset -1px -1px #404040,inset 1px 1px #fff,inset -2px -2px #808080,inset 2px 2px #d4d0c8"></div>
<svg class="a" style="left:271px;top:1058px" width="18" height="18"><circle cx="9" cy="9" r="7.8" fill="#e8401a"/><path d="M9 1.5 Q16.5 2 16.5 9.5 Q16 15 11 16.5 Q15 12 13 7 Q11 3.5 9 1.5z" fill="#ffc020"/><circle cx="8" cy="7.5" r="3" fill="#7a3ac8"/><path d="M2 8 Q3 15 10 16.5 Q5 14 5 9z" fill="#ff8a20"/></svg>
<div class="t" style="left:290px;top:1061px">Neuigkeiten - Eleven-Ga...</div>
<div class="a" style="left:429px;top:1056px;width:159px;height:22px;background:#d4d0c8;box-shadow:inset -1px -1px #404040,inset 1px 1px #fff,inset -2px -2px #808080,inset 2px 2px #d4d0c8"></div>
<svg class="a" style="left:433px;top:1059px" width="17" height="17"><path d="M3 2 L8 4 L8 16 L3 14z" fill="#e8c850"/><path d="M8 4 L13 3 L13 15 L8 16z" fill="#f4dc70"/><path d="M8 4 L8 16" stroke="#c8a030"/></svg>
<div class="t" style="left:452px;top:1061px">CrafterRS</div>
<div class="a" style="left:591px;top:1056px;width:159px;height:22px;background-color:#fff;background-image:repeating-conic-gradient(#fff 0 25%,#e8e6e2 0 50%);background-size:2px 2px;box-shadow:inset 1px 1px #404040,inset -1px -1px #fff,inset 2px 2px #808080,inset -2px -2px #d4d0c8"></div>
<svg class="a" style="left:595px;top:1058px" width="17" height="18"><path d="M8.5 2 L13 8 L11 8 L14.5 13 L2.5 13 L6 8 L4 8 Z" fill="#22aa33" stroke="#063" stroke-width="0.8"/><rect x="7.5" y="13" width="2" height="3" fill="#063"/><path d="M4 4 Q5 0 9 2" stroke="#111" fill="none" stroke-width="1"/><text x="6.5" y="11.5" font-size="6" fill="#fff" font-family="Liberation Sans" font-weight="bold">2</text></svg>
<div class="t" style="left:615px;top:1061px;font-weight:bold;letter-spacing:0.45px">MTKit2 - interior</div>
<div class="t" style="left:1668px;top:1061px;letter-spacing:0">DE</div>
<div class="a" style="left:1689px;top:1056px;width:1px;height:22px;background:#808080;box-shadow:1px 0 #fff"></div>
<div class="a" style="left:1692px;top:1056px;width:226px;height:22px;box-shadow:inset 1px 1px #808080,inset -1px -1px #fff"></div>
<svg class="a" style="left:1693px;top:1059px" width="17" height="17"><path d="M5 6 L8 3 L11 6 M5 10 L8 7 L11 10" stroke="#000" stroke-width="1.6" fill="none"/></svg>
<svg class="a" style="left:1715px;top:1059px" width="17" height="17"><circle cx="8" cy="8" r="6.5" fill="#28a8e8"/><circle cx="4" cy="4" r="2.5" fill="#28a8e8"/><circle cx="12" cy="12" r="2.5" fill="#28a8e8"/><text x="4.5" y="12" font-size="10" font-weight="bold" fill="#fff" font-family="Liberation Sans">S</text></svg>
<svg class="a" style="left:1739px;top:1059px" width="17" height="17"><rect x="1.5" y="3.5" width="14" height="10" fill="#fff" stroke="#000" stroke-width="1.3"/><path d="M2 4 L8.5 10 L15 4 M2 13 L7 8.5 M15 13 L10 8.5" stroke="#000" fill="none"/></svg>
<svg class="a" style="left:1762px;top:1059px" width="17" height="17"><path d="M8 2 L10 5 L15 5 L12 9 L14 14 L8 12 L3 14 L4 9 L1 5 L6 5z" fill="#f07a10"/><circle cx="8.5" cy="8.5" r="2.5" fill="#fff"/></svg>
<svg class="a" style="left:1786px;top:1059px" width="17" height="17"><path d="M3 2 L3 16" stroke="#505050" stroke-width="1.5"/><path d="M3.5 3 L9 3 L11 5 L15 5 L13 9 L9 9 L7 7 L3.5 7z" fill="#f4f4f4" stroke="#808080" stroke-width="0.8"/></svg>
<svg class="a" style="left:1810px;top:1059px" width="17" height="17"><rect x="6" y="5" width="9" height="8" fill="#b0b0b0" stroke="#606060"/><path d="M3 1 L3 15 M1 3 L5 3" stroke="#606060" stroke-width="1.2"/><path d="M7 15 L14 15" stroke="#606060"/></svg>
<svg class="a" style="left:1835px;top:1059px" width="17" height="17"><path d="M2 6 L5 6 L9 2 L9 15 L5 11 L2 11z" fill="#e0e0e0" stroke="#707070" stroke-width="0.8"/><path d="M11 5 Q13 8.5 11 12 M13 3 Q16 8.5 13 14" stroke="#909090" fill="none"/></svg>
<div class="t" style="left:1865px;top:1061px;letter-spacing:0">21:22</div>
<svg class="a" style="left:1899px;top:1060px" width="17" height="15"><rect x="0.5" y="0.5" width="15" height="13" fill="#2a6ac8" stroke="#6a8ab0"/><rect x="1" y="10" width="14" height="3" fill="#183870"/><circle cx="3" cy="11.5" r="1" fill="#8ad0f0"/></svg>
</body></html>
